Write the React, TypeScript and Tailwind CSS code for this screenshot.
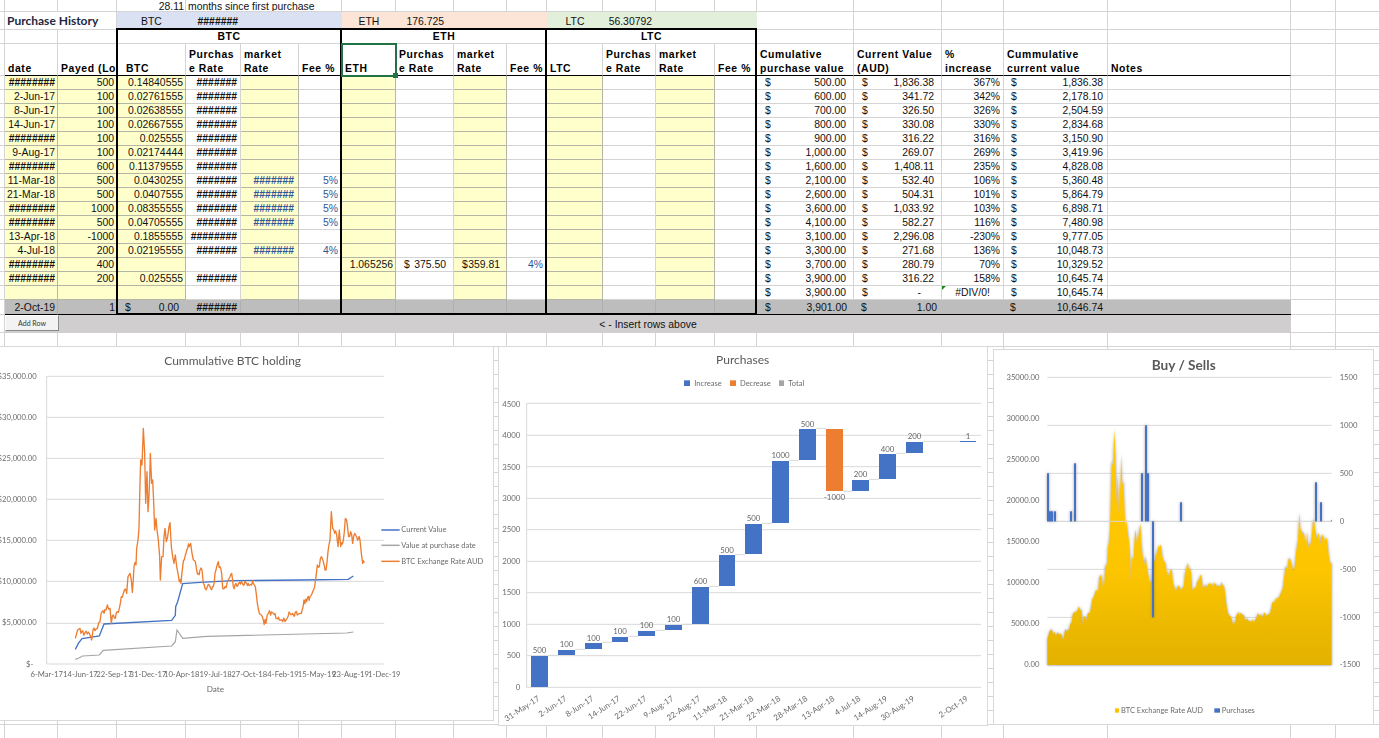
const GRID = "grid grid-cols-[5px_53px_59px_69px_55px_58px_43px_54px_58px_53px_40px_56px_53px_59px_42px_97px_88px_62px_104px_183px_45px_44px] grid-rows-[12px_18px_14px_32px_repeat(16,14px)_15px_18px_repeat(29,14px)]";

const W = "border-r border-b border-[#d4d4d4]";
const Y = "border-r border-b border-[#b6b6a6] bg-[#ffffcc]";
const BASE = "overflow-hidden whitespace-nowrap leading-[14px]";
const HD = "font-['Liberation_Sans',sans-serif] font-bold tracking-[0.6px] text-[10.4px] text-black";

type Row = {
  d: string; p: string; b: string; r: string; m?: string; f?: string;
  cum: string; cur: string; pct: string; cc: string;
};
const H = "#######";
const H8 = "########";
const rows: Row[] = [
  { d: H8, p: "500", b: "0.14840555", r: H, cum: "500.00", cur: "1,836.38", pct: "367%", cc: "1,836.38" },
  { d: "2-Jun-17", p: "100", b: "0.02761555", r: H, cum: "600.00", cur: "341.72", pct: "342%", cc: "2,178.10" },
  { d: "8-Jun-17", p: "100", b: "0.02638555", r: H, cum: "700.00", cur: "326.50", pct: "326%", cc: "2,504.59" },
  { d: "14-Jun-17", p: "100", b: "0.02667555", r: H, cum: "800.00", cur: "330.08", pct: "330%", cc: "2,834.68" },
  { d: H8, p: "100", b: "0.025555", r: H, cum: "900.00", cur: "316.22", pct: "316%", cc: "3,150.90" },
  { d: "9-Aug-17", p: "100", b: "0.02174444", r: H, cum: "1,000.00", cur: "269.07", pct: "269%", cc: "3,419.96" },
  { d: H8, p: "600", b: "0.11379555", r: H, cum: "1,600.00", cur: "1,408.11", pct: "235%", cc: "4,828.08" },
  { d: "11-Mar-18", p: "500", b: "0.0430255", r: H, m: H, f: "5%", cum: "2,100.00", cur: "532.40", pct: "106%", cc: "5,360.48" },
  { d: "21-Mar-18", p: "500", b: "0.0407555", r: H, m: H, f: "5%", cum: "2,600.00", cur: "504.31", pct: "101%", cc: "5,864.79" },
  { d: H8, p: "1000", b: "0.08355555", r: H, m: H, f: "5%", cum: "3,600.00", cur: "1,033.92", pct: "103%", cc: "6,898.71" },
  { d: H8, p: "500", b: "0.04705555", r: H, m: H, f: "5%", cum: "4,100.00", cur: "582.27", pct: "116%", cc: "7,480.98" },
  { d: "13-Apr-18", p: "-1000", b: "0.1855555", r: H8, cum: "3,100.00", cur: "2,296.08", pct: "-230%", cc: "9,777.05" },
  { d: "4-Jul-18", p: "200", b: "0.02195555", r: H, m: H, f: "4%", cum: "3,300.00", cur: "271.68", pct: "136%", cc: "10,048.73" },
  { d: H8, p: "400", b: "", r: "", cum: "3,700.00", cur: "280.79", pct: "70%", cc: "10,329.52" },
  { d: H8, p: "200", b: "0.025555", r: H, cum: "3,900.00", cur: "316.22", pct: "158%", cc: "10,645.74" },
  { d: "", p: "", b: "", r: "", cum: "3,900.00", cur: "-", pct: "#DIV/0!", cc: "10,645.74" },
];

function Acct({ v, cls = "", pad = "pl-2 pr-[7px]" }: { v: string; cls?: string; pad?: string }) {
  return (
    <div className={`${BASE} ${cls} ${pad} flex justify-between`}>
      <span>$</span>
      <span>{v}</span>
    </div>
  );
}

function Empty({ n }: { n: number }) {
  return (
    <>
      {Array.from({ length: n }).map((_, i) => (
        <div key={i} className={W} />
      ))}
    </>
  );
}

function Hd({ pad = "pl-[2px]", children }: { pad?: string; children: React.ReactNode }) {
  return (
    <div className={`${BASE} ${HD} ${pad} border-r border-b border-r-[#d4d4d4] border-b-black flex items-end`}>
      <span className="block translate-y-px">{children}</span>
    </div>
  );
}

const hash = (v?: string) => (v && v.startsWith("##") ? "font-bold" : "");

function Sheet() {
  return (
    <div className={`${GRID} font-['Liberation_Sans',sans-serif] text-[10.4px] text-[#111]`}>
      {/* row 1 */}
      <div className={W} />
      <div className={W} />
      <div className={W} />
      <div className={`${W} ${BASE} text-right pr-[1px] leading-[11px]`}>28.11</div>
      <div className={`${W} ${BASE} col-span-3 pl-[2px] leading-[11px]`}>months since first purchase</div>
      <Empty n={2} />
      <Empty n={2} />
      <Empty n={4} />
      <Empty n={7} />

      {/* row 2 */}
      <div className={W} />
      <div className={`${W} col-span-2 flex items-center pl-[2px] font-['Lato',sans-serif] font-bold text-[12px] text-[#1c2740] whitespace-nowrap`}>Purchase History</div>
      <div className="bg-[#d9e1f2] text-center leading-[20px]">BTC</div>
      <div className="bg-[#d9e1f2] text-right pr-[3px] leading-[20px] font-bold">{H}</div>
      <div className="bg-[#d9e1f2] col-span-2" />
      <div className="bg-[#fce4d6] text-center leading-[20px]">ETH</div>
      <div className="bg-[#fce4d6] text-right pr-[10px] leading-[20px]">176.725</div>
      <div className="bg-[#fce4d6] col-span-2" />
      <div className="bg-[#e2efda] text-center leading-[20px]">LTC</div>
      <div className="bg-[#e2efda] text-right pr-[4px] leading-[20px]">56.30792</div>
      <div className="bg-[#e2efda] col-span-2" />
      <Empty n={7} />

      {/* row 3 */}
      <div className={W} />
      <div className={W} />
      <div className={W} />
      <div className={`${W} ${BASE} ${HD} col-span-4 text-center`}>BTC</div>
      <div className={`${W} ${BASE} ${HD} col-span-4 text-center`}>ETH</div>
      <div className={`${W} ${BASE} ${HD} col-span-4 text-center`}>LTC</div>
      <Empty n={7} />

      {/* header row */}
      <div className={W} />
      <Hd pad="pl-[3px]">date</Hd>
      <Hd pad="pl-[3px]">Payed (Lo</Hd>
      {[0, 1, 2].map((i) => (
        <div key={i} className="contents">
          <Hd pad={i === 0 ? "pl-[9px]" : "pl-[3px]"}>{["BTC", "ETH", "LTC"][i]}</Hd>
          <Hd pad="pl-[3px]">Purchas<br />e Rate</Hd>
          <Hd pad="pl-[3px]">market<br />Rate</Hd>
          <Hd pad="pl-[3px]">Fee %</Hd>
        </div>
      ))}
      <Hd pad="pl-[3px]">Cumulative<br />purchase value</Hd>
      <Hd pad="pl-[3px]">Current Value<br />(AUD)</Hd>
      <Hd pad="pl-[3px]">%<br />increase</Hd>
      <Hd pad="pl-[3px]">Cummulative<br />current value</Hd>
      <Hd pad="pl-[3px]">Notes</Hd>
      <Empty n={2} />

      {/* data rows */}
      {rows.map((r, i) => {
        const eth = i === 13;
        const blue = "text-[#2f5597]";
        return (
          <div key={i} className="contents">
            <div className={W} />
            <div className={`${Y} ${BASE} text-right pr-[2px] ${hash(r.d)}`}>{r.d}</div>
            <div className={`${Y} ${BASE} text-right pr-[2px]`}>{r.p}</div>
            <div className={`${Y} ${BASE} text-right pr-[2px]`}>{r.b}</div>
            <div className={`${W} ${BASE} text-right pr-[3px] ${hash(r.r)}`}>{r.r}</div>
            <div className={`${Y} ${BASE} text-right pr-[4px] ${blue} ${hash(r.m)}`}>{r.m}</div>
            <div className={`${W} ${BASE} text-right pr-[3px] ${blue}`}>{r.f}</div>
            <div className={`${Y} ${BASE} text-right pr-[2px]`}>{eth ? "1.065256" : ""}</div>
            {eth ? <Acct v="375.50" cls={W} /> : <div className={W} />}
            {eth ? <Acct v="359.81" cls={Y} pad="pl-2 pr-[6px]" /> : <div className={Y} />}
            <div className={`${W} ${BASE} text-right pr-[3px] ${blue}`}>{eth ? "4%" : ""}</div>
            <div className={Y} />
            <div className={W} />
            <div className={Y} />
            <div className={W} />
            <Acct v={r.cum} cls={W} />
            {r.cur === "-" ? (
              <div className={`${W} ${BASE} flex justify-between pl-2 pr-5`}><span>$</span><span>-</span></div>
            ) : (
              <Acct v={r.cur} cls={W} />
            )}
            {r.pct === "#DIV/0!" ? (
              <div className={`${W} ${BASE} relative text-center`}>
                <span className="absolute left-0 top-0 w-0 h-0 border-t-[4px] border-r-[4px] border-t-[#1a8a1a] border-r-transparent" />
                {r.pct}
              </div>
            ) : (
              <div className={`${W} ${BASE} text-right pr-[3px]`}>{r.pct}</div>
            )}
            <Acct v={r.cc} cls={W} pad="pl-[7px] pr-[4px]" />
            <Empty n={3} />
          </div>
        );
      })}

      {/* total row */}
      <div className={W} />
      <div className={`${BASE} bg-[#bdbdbd] border-r border-r-[#b0b0b0] border-b border-b-black text-right pr-[2px] leading-[15px]`}>2-Oct-19</div>
      <div className={`${BASE} bg-[#bdbdbd] border-r border-r-[#b0b0b0] border-b border-b-black text-right pr-[1px] leading-[15px]`}>1</div>
      <Acct v="0.00" cls="bg-[#bdbdbd] border-b border-b-black !leading-[15px]" />
      <div className={`${BASE} bg-[#bdbdbd] border-r border-r-[#b0b0b0] border-b border-b-black text-right pr-[3px] leading-[15px] font-bold`}>{H}</div>
      {Array.from({ length: 10 }).map((_, i) => (
        <div key={i} className="bg-[#bdbdbd] border-r border-r-[#b0b0b0] border-b border-b-black" />
      ))}
      <Acct v="3,901.00" cls="bg-[#bdbdbd] border-b border-b-black !leading-[15px]" />
      <Acct v="1.00" cls="bg-[#bdbdbd] border-b border-b-black !leading-[15px]" pad="pl-[7px] pr-[5px]" />
      <div className="bg-[#bdbdbd] border-b border-b-black" />
      <Acct v="10,646.74" cls="bg-[#bdbdbd] border-b border-b-black !leading-[15px]" pad="pl-[6px] pr-[5px]" />
      <div className="bg-[#bdbdbd] border-b border-b-black" />
      <Empty n={2} />

      {/* insert row */}
      <div className={W} />
      <div className="col-span-19 bg-[#d0cece] relative text-center leading-[20px]">
        &lt; - Insert rows above
        <button className="absolute left-0 top-0 w-[54px] h-[16px] bg-[#f3f3f3] border-t border-l border-t-[#ffffff] border-l-[#ffffff] border-r border-b border-r-[#8a8a8a] border-b-[#8a8a8a] text-[7px] leading-[14px] text-[#333] font-['Lato',sans-serif]">
          Add Row
        </button>
      </div>
      <Empty n={2} />

      {/* empty rows beneath the charts */}
      <Empty n={22 * 29} />
    </div>
  );
}

function Boxes() {
  return (
    <div className={`absolute inset-0 pointer-events-none ${GRID}`}>
      <div className="col-[4/8] row-[3/22] -mt-[2px] -ml-px border-2 border-black" />
      <div className="col-[8/12] row-[3/22] -mt-[2px] -ml-[2px] border-2 border-black" />
      <div className="col-[12/16] row-[3/22] -mt-[2px] -ml-[2px] border-2 border-black" />
      <div className="col-[8/9] row-[4/5] -m-px border-2 border-[#217346] relative">
        <span className="absolute -right-[3px] -bottom-[3px] w-[5px] h-[5px] bg-[#217346]" />
      </div>
    </div>
  );
}

/* ---------- chart data: every coordinate is in 1/3 px units ---------- */
const btcTrace: [number, number][] = [
  [226,895],[230,880],[236,868],[240,865],[243,880],[248,872],[255,878],[262,882],[268,880],[272,890],[275,900],[279,870],[285,872],[292,866],[296,848],[300,845],[303,822],[306,815],[312,820],[318,810],[322,795],[326,808],[330,805],[334,850],[340,825],[346,835],[352,815],[358,805],[364,770],[370,760],[374,748],[380,760],[384,710],[390,700],[394,720],[397,757],[402,680],[408,675],[410,625],[414,600],[417,565],[420,430],[422,360],[426,375],[430,265],[434,340],[437,490],[441,395],[444,515],[449,420],[451,340],[455,430],[458,420],[461,485],[464,570],[468,535],[471,570],[475,600],[479,650],[481,720],[485,650],[489,650],[492,590],[495,565],[499,605],[503,590],[507,560],[510,548],[514,620],[518,650],[522,670],[526,645],[530,680],[534,700],[538,725],[543,730],[548,680],[553,660],[558,640],[563,625],[568,620],[572,610],[576,640],[580,660],[586,665],[590,690],[595,700],[600,690],[606,690],[610,730],[615,745],[622,740],[628,735],[632,745],[640,740],[645,700],[650,680],[655,665],[660,680],[665,700],[668,745],[675,740],[682,725],[690,710],[695,700],[700,740],[708,730],[716,730],[724,725],[732,735],[740,730],[750,735],[760,730],[766,740],[772,790],[778,820],[784,825],[790,840],[798,850],[805,820],[812,825],[820,820],[828,835],[838,840],[848,845],[855,845],[862,835],[870,820],[880,825],[892,825],[904,820],[912,780],[920,785],[930,770],[938,755],[944,740],[948,710],[952,675],[958,680],[964,650],[970,665],[978,690],[984,635],[990,600],[994,515],[998,565],[1004,580],[1010,585],[1014,620],[1018,570],[1022,620],[1030,600],[1036,535],[1040,540],[1046,590],[1052,575],[1058,610],[1064,580],[1070,590],[1080,600],[1084,640],[1088,670],[1093,668],
];
function rnd(i: number) {
  const s = Math.sin(i * 12.9898) * 43758.5453;
  return s - Math.floor(s) - 0.5;
}
const btcDense: [number, number][] = [];
btcTrace.forEach((p, i) => {
  const n = btcTrace[i + 1];
  btcDense.push(p);
  if (n) {
    const steps = Math.max(1, Math.floor((n[0] - p[0]) / 2.5));
    for (let k = 1; k < steps; k++) {
      const t = k / steps;
      btcDense.push([p[0] + (n[0] - p[0]) * t, p[1] + (n[1] - p[1]) * t + rnd(i * 7 + k) * 22]);
    }
  }
});
const pts = (a: [number, number][]) => a.map(([x, y]) => `${x.toFixed(1)},${y.toFixed(1)}`).join(" ");
const blueLine: [number, number][] = [[226,928],[235,910],[246,896],[270,892],[298,888],[312,852],[515,841],[526,826],[527,800],[533,785],[548,731],[600,727],[700,722],[900,720],[1045,718],[1060,708]];
const grayLine: [number, number][] = [[226,958],[235,955],[248,948],[298,945],[310,931],[515,918],[526,905],[531,870],[548,895],[620,889],[1040,879],[1060,876]];

const LATO = "Lato, sans-serif";
const GRIDC = "#d9d9d9";

function Chart1() {
  const ys: [string, number, number][] = [
    ["$35,000.00", 109, 109], ["$30,000.00", 232, 232], ["$25,000.00", 355, 355], ["$20,000.00", 478, 478],
    ["$15,000.00", 601, 601], ["$10,000.00", 724, 724], ["$5,000.00", 850, 848], ["$-", 972, 972],
  ];
  const xs = ["6-Mar-17","14-Jun-17","22-Sep-17","31-Dec-17","10-Apr-18","19-Jul-18","27-Oct-18","4-Feb-19","15-May-19","23-Aug-19","1-Dec-19"];
  return (
    <svg viewBox="0 21 1479 1119" className="block w-full h-full blur-[0.3px]" fontFamily={LATO}>
      <text x="698" y="75" textAnchor="middle" fontSize="36" fill="#595959">Cummulative BTC holding</text>
      {ys.map(([t, g, l]) => (
        <g key={t}>
          <line x1="140" x2="1153" y1={g} y2={g} stroke={GRIDC} strokeWidth="3" />
          <text x={t === "$-" ? 100 : 110} y={l + 8} textAnchor="end" fontSize="23" fill="#6b6b6b">{t}</text>
        </g>
      ))}
      <line x1="140" x2="140" y1="109" y2="972" stroke={GRIDC} strokeWidth="3" />
      {xs.map((t, i) => (
        <text key={t} x={140 + i * 101.3} y="1011" textAnchor="middle" fontSize="23" fill="#6b6b6b">{t}</text>
      ))}
      <text x="646" y="1055" textAnchor="middle" fontSize="24.5" fill="#6b6b6b">Date</text>
      <polyline points={pts(grayLine)} fill="none" stroke="#a5a5a5" strokeWidth="3.5" />
      <polyline points={pts(blueLine)} fill="none" stroke="#4472c4" strokeWidth="4" />
      <polyline points={pts(btcDense)} fill="none" stroke="#ed7d31" strokeWidth="4" strokeLinejoin="round" />
      <line x1="1144" x2="1199" y1="570" y2="570" stroke="#4472c4" strokeWidth="4.5" />
      <line x1="1144" x2="1199" y1="616" y2="616" stroke="#a5a5a5" strokeWidth="4.5" />
      <line x1="1144" x2="1199" y1="664" y2="664" stroke="#ed7d31" strokeWidth="4.5" />
      <text x="1204" y="576" fontSize="22.5" fill="#6b6b6b">Current Value</text>
      <text x="1204" y="624" fontSize="22.5" fill="#6b6b6b">Value at purchase date</text>
      <text x="1204" y="672" fontSize="22.5" fill="#6b6b6b">BTC Exchange Rate AUD</text>
    </svg>
  );
}

function Chart2() {
  const ticks: [string, number, number][] = [
    ["4500",190,193],["4000",286,286],["3500",380,381],["3000",475,475],["2500",569,569],["2000",664,664],["1500",758,758],["1000",853,853],["500",947,947],["0",1042,1042],
  ];
  const bars: [number, number, number, number, string, number, string, number, number][] = [
    [108,51,948,1041,"500",932,"31-May-17",189,946],
    [189,51,930,945,"100",914,"2-Jun-17",270,928],
    [270,51,909,927,"100",896,"8-Jun-17",351,907],
    [351,48,891,906,"100",875,"14-Jun-17",429,889],
    [429,51,873,888,"100",857,"22-Jun-17",510,871],
    [510,51,855,870,"100",839,"9-Aug-17",591,853],
    [591,51,741,852,"600",725,"22-Aug-17",672,739],
    [672,48,645,738,"500",632,"11-Mar-18",750,644],
    [750,51,552,642,"500",536,"21-Mar-18",831,550],
    [831,51,363,549,"1000",347,"22-Mar-18",912,361],
    [912,51,267,360,"500",254,"28-Mar-18",993,265],
    [993,51,267,453,"-1000",473,"13-Apr-18",1071,454],
    [1071,51,420,453,"200",404,"4-Jul-18",1152,418],
    [1152,51,342,417,"400",329,"14-Aug-19",1233,340],
    [1233,51,306,339,"200",290,"30-Aug-19",1395,304],
    [1395,48,303,306,"1",290,"2-Oct-19",0,0],
  ];
  return (
    <svg viewBox="12 21 1464 1134" className="block w-full h-full blur-[0.3px]" fontFamily={LATO}>
      <text x="743" y="72" textAnchor="middle" fontSize="36" fill="#595959">Purchases</text>
      <rect x="567" y="121" width="18" height="17" fill="#4472c4" />
      <text x="598" y="137" fontSize="22.5" fill="#6b6b6b">Increase</text>
      <rect x="705" y="121" width="18" height="17" fill="#ed7d31" />
      <text x="735" y="137" fontSize="22.5" fill="#6b6b6b">Decrease</text>
      <rect x="852" y="121" width="15" height="17" fill="#a5a5a5" />
      <text x="880" y="137" fontSize="22.5" fill="#6b6b6b">Total</text>
      {ticks.map(([t, g, l]) => (
        <g key={t}>
          <line x1="95" x2="1458" y1={g} y2={g} stroke={GRIDC} strokeWidth="3" />
          <text x="76" y={l + 8} textAnchor="end" fontSize="23.5" fill="#6b6b6b">{t}</text>
        </g>
      ))}
      <line x1="95" x2="95" y1="190" y2="1042" stroke={GRIDC} strokeWidth="3" />
      {bars.map(([x, w, t, b, lab, ly, xl, cx, cy], i) => (
        <g key={i}>
          <rect x={x} y={t} width={w} height={b - t} fill={lab === "-1000" ? "#ed7d31" : "#4472c4"} />
          {cx > 0 && <line x1={x + w} x2={cx} y1={cy} y2={cy} stroke="#d9d9d9" strokeWidth="3" />}
          <text x={x + w / 2} y={ly + 8} textAnchor="middle" fontSize="23.5" fill="#666">{lab}</text>
          <text textAnchor="end" fontSize="24" fill="#6b6b6b" transform={`translate(${x + w / 2 + 2} 1080) rotate(-33)`}>{xl}</text>
        </g>
      ))}
    </svg>
  );
}

function Chart3() {
  const tx = (x: number) => 187 + ((x - 226) * 853) / 867;
  const area = pts([[187, 975], ...btcDense.map(([x, y]) => [tx(x), y + 3] as [number, number]), [1040, 975]]);
  const grid = [112, 256, 400, 544, 688, 832, 975];
  const left: [string, number][] = [["35000.00",112],["30000.00",235],["25000.00",358],["20000.00",481],["15000.00",604],["10000.00",727],["5000.00",850],["0.00",973]];
  const right: [string, number][] = [["1500",112],["1000",256],["500",400],["0",544],["-500",688],["-1000",832],["-1500",973]];
  const bars: [number, number, number, number][] = [
    [186,6,400,544],[192,12,514,544],[207,6,514,544],[255,6,514,544],[267,6,370,544],[468,6,400,544],[480,6,256,544],[486,6,400,544],[501,6,544,832],[585,6,487,544],[990,6,427,544],[1005,6,487,544],[1038,3,541,544],
  ];
  return (
    <svg viewBox="27 30 1137 1122" className="block w-full h-full blur-[0.3px]" fontFamily={LATO}>
      <defs>
        <linearGradient id="gold" x1="0" x2="0" y1="0" y2="1">
          <stop offset="0" stopColor="#ffc800" />
          <stop offset="0.6" stopColor="#fcc500" />
          <stop offset="1" stopColor="#e2b100" />
        </linearGradient>
        <filter id="soft" x="-5%" y="-5%" width="110%" height="110%">
          <feDropShadow dx="0" dy="0" stdDeviation="5" floodColor="#666" floodOpacity="0.65" />
        </filter>
      </defs>
      <text x="596" y="90" textAnchor="middle" fontSize="41" fontWeight="700" fill="#595959">Buy / Sells</text>
      {grid.map((g) => (
        <line key={g} x1="187" x2="1040" y1={g} y2={g} stroke={GRIDC} strokeWidth="3" />
      ))}
      {left.map(([t, y]) => (
        <text key={t} x="163" y={y + 8} textAnchor="end" fontSize="23" fill="#6b6b6b">{t}</text>
      ))}
      {right.map(([t, y]) => (
        <text key={t} x="1064" y={y + 8} fontSize="23" fill="#6b6b6b">{t}</text>
      ))}
      <polygon points={area} fill="url(#gold)" filter="url(#soft)" />
      {grid.slice(3, 4).map((g) => (
        <line key={g} x1="187" x2="1040" y1={g} y2={g} stroke={GRIDC} strokeWidth="3" />
      ))}
      <g filter="url(#soft)">
        {bars.map(([x, w, t, b], i) => (
          <rect key={i} x={x} y={t} width={w} height={b - t} fill="#4472c4" />
        ))}
      </g>
      <rect x="390" y="1105" width="12" height="13" fill="#ffc000" />
      <text x="408" y="1119" fontSize="22.5" fill="#6b6b6b">BTC Exchange Rate AUD</text>
      <rect x="688" y="1105" width="17" height="13" fill="#4472c4" />
      <text x="710" y="1119" fontSize="22.5" fill="#6b6b6b">Purchases</text>
    </svg>
  );
}

function Charts() {
  return (
    <div className="absolute left-0 top-[346px] flex items-start">
      <div className="w-[494px] h-[375px] bg-white border-y border-r border-[#d9d9d9] overflow-hidden">
        <Chart1 />
      </div>
      <div className="ml-[4px] w-[490px] h-[380px] bg-white border border-[#d9d9d9] overflow-hidden">
        <Chart2 />
      </div>
      <div className="ml-[5px] mt-[3px] w-[381px] h-[376px] bg-white border border-[#d9d9d9] overflow-hidden">
        <Chart3 />
      </div>
    </div>
  );
}

export default function App() {
  return (
    <div className="relative w-[1380px] h-[738px] overflow-hidden bg-white">
      <Sheet />
      <Boxes />
      <Charts />
    </div>
  );
}
